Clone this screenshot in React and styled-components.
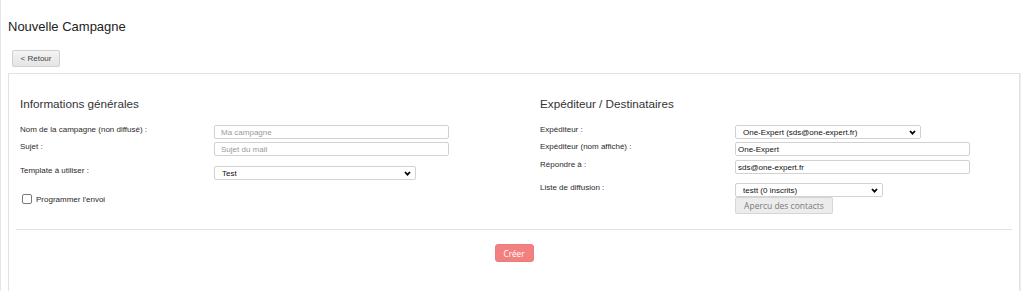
import React from "react";
import styled, { createGlobalStyle } from "styled-components";

const GlobalStyle = createGlobalStyle`
  html, body {
    margin: 0;
    padding: 0;
    background: #ffffff;
    overflow: hidden;
  }
  body {
    font-family: "Liberation Sans", Arial, sans-serif;
    color: #333;
  }
  * { box-sizing: border-box; }
`;

const Page = styled.div`
  min-height: 291px;
  border-left: 1px solid #e6e6e6;
  padding: 19px 4px 0 7px;
`;

const Title = styled.h1`
  margin: 0;
  font-size: 13px;
  line-height: 16px;
  font-weight: normal;
  color: #222;
`;

const BackButton = styled.button`
  display: block;
  margin: 15px 0 0 4px;
  width: 48px;
  height: 17px;
  padding: 0;
  border: 1px solid #cfcfcf;
  border-radius: 2px;
  background: linear-gradient(#f4f4f4, #e4e4e4);
  font-family: "Liberation Sans", Arial, sans-serif;
  font-size: 8px;
  color: #444;
  cursor: pointer;
`;

const Panel = styled.section`
  margin-top: 6px;
  border: 1px solid #e2e2e2;
  box-shadow: 1px 0 0 #eeeeee;
  padding: 23px 0 40px;
`;

const Columns = styled.div`
  display: grid;
  grid-template-columns: 520px 1fr;
  padding-left: 11px;
`;

const Column = styled.div`
  display: flex;
  flex-direction: column;
`;

const SectionTitle = styled.h2`
  margin: 0 0 14px;
  font-size: 11.7px;
  line-height: 14px;
  font-weight: normal;
  color: #333;
`;

const FormRow = styled.div`
  display: grid;
  grid-template-columns: ${(p) => p.$labelW || 194}px 1fr;
  align-items: start;
  margin-top: ${(p) => p.$mt || 0}px;
`;

const Label = styled.label`
  font-size: 8px;
  line-height: 10px;
  color: #2a2a2a;
`;

const Field = styled.div`
  display: flex;
  flex-direction: column;
  align-items: flex-start;
  line-height: 0;
`;

const TextInput = styled.input`
  display: block;
  width: ${(p) => p.$w}px;
  height: 14px;
  margin: 0;
  padding: 0 0 0 ${(p) => p.$pl}px;
  border: 1px solid #d2d2d2;
  border-radius: 2px;
  font-family: "Liberation Sans", Arial, sans-serif;
  font-size: 8px;
  color: #111;
  outline: none;
  &::placeholder {
    color: #9a9a9a;
  }
`;

const SelectWrap = styled.div`
  position: relative;
  width: ${(p) => p.$w}px;
  height: 14px;
`;

const Select = styled.select`
  display: block;
  appearance: none;
  -webkit-appearance: none;
  width: 100%;
  height: 14px;
  margin: 0;
  padding: 0 14px 0 7px;
  border: 1px solid #d2d2d2;
  border-radius: 2px;
  background: #fff;
  font-family: "Liberation Sans", Arial, sans-serif;
  font-size: 8px;
  color: #111;
  outline: none;
`;

const Chevron = styled.svg`
  position: absolute;
  right: 5px;
  top: 5px;
  pointer-events: none;
`;

const SecondaryButton = styled.button`
  display: block;
  width: 98px;
  height: 17px;
  margin: 0;
  padding: 0;
  border: 1px solid #d6d6d6;
  border-radius: 2px;
  background: #ececec;
  font-family: "Open Sans", "Liberation Sans", sans-serif;
  font-size: 8.5px;
  line-height: 15px;
  color: #7a7a7a;
`;

const CheckRow = styled.label`
  display: flex;
  align-items: center;
  gap: 4px;
  margin: 12px 0 0 2px;
  font-size: 8px;
  line-height: 10px;
  color: #2a2a2a;
`;

const CheckBox = styled.input`
  appearance: none;
  -webkit-appearance: none;
  width: 10px;
  height: 10px;
  margin: 0;
  border: 1px solid #7a7a7a;
  border-radius: 2px;
  background: #fff;
`;

const CheckText = styled.span`
  padding-top: 3px;
`;

const Divider = styled.hr`
  margin: 15px 7px 0;
  border: none;
  border-top: 1px solid #e2e2e2;
  height: 0;
`;

const Footer = styled.div`
  display: flex;
  justify-content: center;
  padding-top: 14px;
`;

const PrimaryButton = styled.button`
  width: 39px;
  height: 18px;
  padding: 0;
  border: 1px solid #ee7b7b;
  border-radius: 3px;
  background: #f28080;
  font-family: "Open Sans", "Liberation Sans", sans-serif;
  font-size: 8.2px;
  color: #fff;
  cursor: pointer;
`;

function Dropdown({ width, value }) {
  return (
    <SelectWrap $w={width}>
      <Select defaultValue={value}>
        <option>{value}</option>
      </Select>
      <Chevron width="7" height="5" viewBox="0 0 7 5">
        <path d="M1 1 L3.5 3.6 L6 1" fill="none" stroke="#000" strokeWidth="1.8" />
      </Chevron>
    </SelectWrap>
  );
}

export default function App() {
  return (
    <>
      <GlobalStyle />
      <Page>
        <Title>Nouvelle Campagne</Title>
        <BackButton>&lt; Retour</BackButton>
        <Panel>
          <Columns>
            <Column>
              <SectionTitle>Informations générales</SectionTitle>
              <FormRow>
                <Label>Nom de la campagne (non diffusé) :</Label>
                <Field>
                  <TextInput $w={235} $pl={6} placeholder="Ma campagne" />
                </Field>
              </FormRow>
              <FormRow $mt={3}>
                <Label>Sujet :</Label>
                <Field>
                  <TextInput $w={235} $pl={6} placeholder="Sujet du mail" />
                </Field>
              </FormRow>
              <FormRow $mt={10}>
                <Label>Template à utiliser :</Label>
                <Field>
                  <Dropdown width={202} value="Test" />
                </Field>
              </FormRow>
              <CheckRow>
                <CheckBox type="checkbox" />
                <CheckText>Programmer l'envoi</CheckText>
              </CheckRow>
            </Column>
            <Column>
              <SectionTitle>Expéditeur / Destinataires</SectionTitle>
              <FormRow $labelW={195}>
                <Label>Expéditeur :</Label>
                <Field>
                  <Dropdown width={186} value="One-Expert (sds@one-expert.fr)" />
                </Field>
              </FormRow>
              <FormRow $labelW={195} $mt={3}>
                <Label>Expéditeur (nom affiché) :</Label>
                <Field>
                  <TextInput $w={235} $pl={2} defaultValue="One-Expert" />
                </Field>
              </FormRow>
              <FormRow $labelW={195} $mt={4}>
                <Label>Répondre à :</Label>
                <Field>
                  <TextInput $w={235} $pl={2} defaultValue="sds@one-expert.fr" />
                </Field>
              </FormRow>
              <FormRow $labelW={195} $mt={9}>
                <Label>Liste de diffusion :</Label>
                <Field>
                  <Dropdown width={148} value="testt (0 inscrits)" />
                  <SecondaryButton disabled>Apercu des contacts</SecondaryButton>
                </Field>
              </FormRow>
            </Column>
          </Columns>
          <Divider />
          <Footer>
            <PrimaryButton>Créer</PrimaryButton>
          </Footer>
        </Panel>
      </Page>
    </>
  );
}
